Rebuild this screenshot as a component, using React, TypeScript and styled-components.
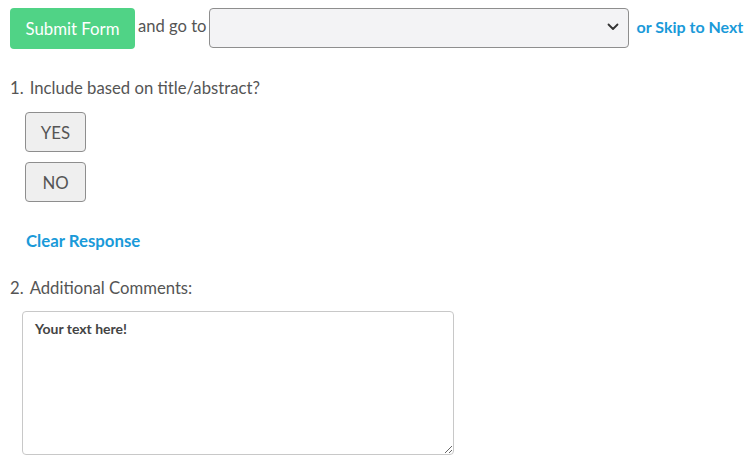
import styled, { createGlobalStyle } from "styled-components";

const GlobalStyle = createGlobalStyle`
	body {
		margin: 0;
		background: #fff;
		font-family: Lato, "Open Sans", sans-serif;
		color: #555;
	}
`;

const Page = styled.div`
	padding: 6px 10px 0 10px;
`;

const TopBar = styled.div`
	display: flex;
	align-items: center;
	white-space: nowrap;
`;

const SubmitButton = styled.button`
	flex: none;
	height: 41px;
	width: 125px;
	margin-top: 2px;
	padding: 0;
	border: none;
	border-radius: 4px;
	background: #50d386;
	color: #fff;
	font-family: inherit;
	font-size: 16.8px;
	cursor: pointer;
`;

const GoText = styled.span`
	font-size: 16.6px;
	margin: -3px 0 0 3px;
`;

const SelectBox = styled.div`
	flex: none;
	position: relative;
	width: 420px;
	height: 40px;
	box-sizing: border-box;
	margin-left: 2px;
	border: 1px solid #8e8e8e;
	border-radius: 4px;
	background: #f3f3f5;
	& svg {
		position: absolute;
		right: 9px;
		top: 14px;
	}
`;

const LinkText = styled.a<{ $size?: number }>`
	color: #1a9ad9;
	font-weight: 700;
	font-size: ${(p) => p.$size ?? 16.8}px;
	text-decoration: none;
	cursor: pointer;
`;

const SkipLink = styled(LinkText)`
	margin: -3px 0 0 8px;
`;

const Question = styled.div`
	display: flex;
	flex-direction: column;
`;

const QuestionLabel = styled.div<{ $top: number }>`
	margin-top: ${(p) => p.$top}px;
	font-size: 16.7px;
	line-height: 20px;
	& span {
		margin-right: 6px;
	}
`;

const Choices = styled.div`
	display: flex;
	flex-direction: column;
	align-items: flex-start;
	gap: 10px;
	padding: 14px 0 0 15px;
`;

const ChoiceButton = styled.button`
	width: 61px;
	height: 40px;
	box-sizing: border-box;
	border: 1px solid #8e8e8e;
	border-radius: 4px;
	background: #efefef;
	color: #555;
	font-family: inherit;
	font-size: 16.8px;
	padding: 0;
`;

const ClearRow = styled.div`
	padding: 29px 0 0 16px;
	line-height: 20px;
`;

const Comments = styled.textarea`
	display: block;
	margin: 13px 0 0 12px;
	width: 432px;
	height: 144px;
	box-sizing: border-box;
	padding: 8px 12px;
	border: 1px solid #c8c8c8;
	border-radius: 4px;
	font-family: inherit;
	font-size: 14px;
	font-weight: 700;
	color: #555;
	resize: both;
	outline: none;
	&::placeholder {
		color: #444;
		opacity: 1;
	}
`;

const Chevron = () => (
	<svg width="12" height="8" viewBox="0 0 12 8" fill="none">
		<path d="M1.5 1.5 L6 6 L10.5 1.5" stroke="#333" strokeWidth="1.8" strokeLinecap="round" strokeLinejoin="round" />
	</svg>
);

const App = () => {
	return (
		<>
			<GlobalStyle />
			<Page>
				<TopBar>
					<SubmitButton>Submit Form</SubmitButton>
					<GoText>and go to</GoText>
					<SelectBox>
						<Chevron />
					</SelectBox>
					<SkipLink $size={16}>or Skip to Next</SkipLink>
				</TopBar>
				<Question>
					<QuestionLabel $top={29}>
						<span>1.</span>Include based on title/abstract?
					</QuestionLabel>
					<Choices>
						<ChoiceButton>YES</ChoiceButton>
						<ChoiceButton>NO</ChoiceButton>
					</Choices>
					<ClearRow>
						<LinkText>Clear Response</LinkText>
					</ClearRow>
				</Question>
				<Question>
					<QuestionLabel $top={27}>
						<span>2.</span>Additional Comments:
					</QuestionLabel>
					<Comments placeholder="Your text here!" />
				</Question>
			</Page>
		</>
	);
};

export default App;
